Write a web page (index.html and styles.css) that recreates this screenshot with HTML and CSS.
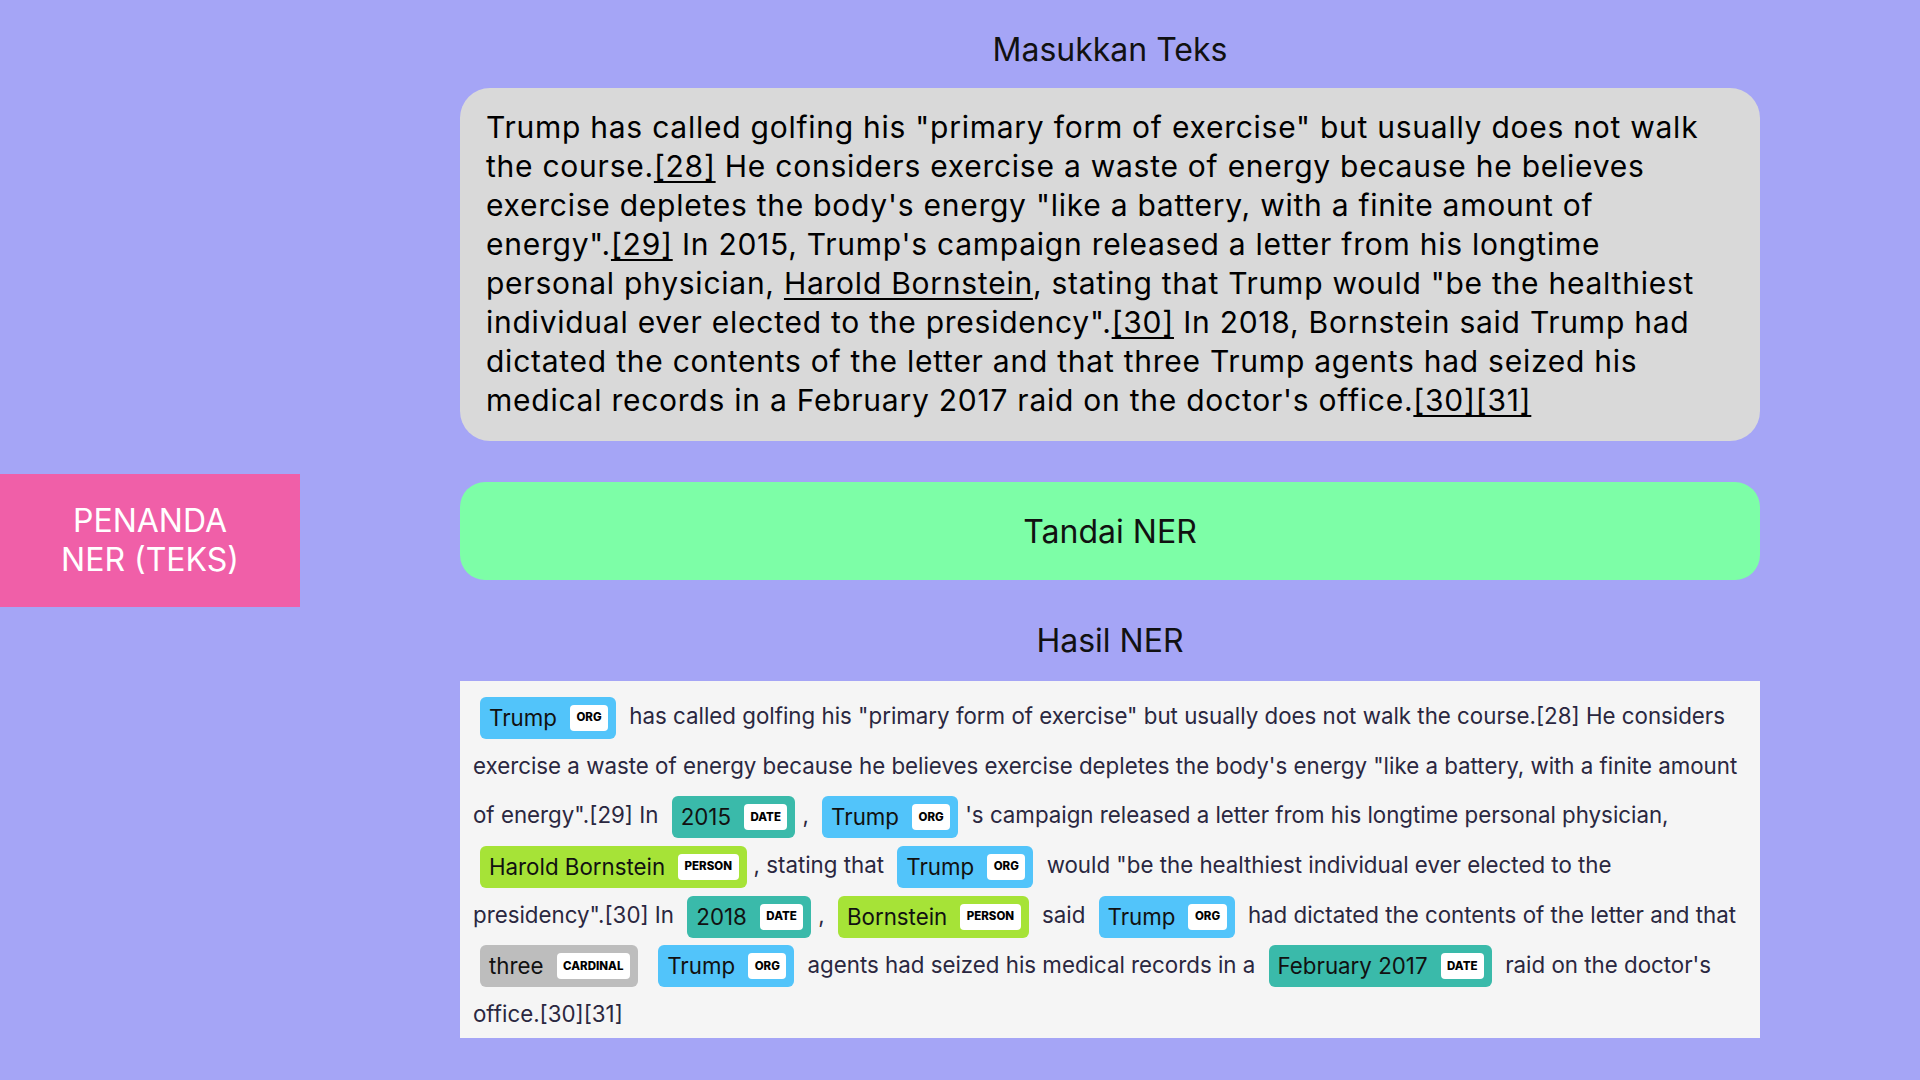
FILE: index.html
```html
<!DOCTYPE html>
<html lang="id">
<head>
<meta charset="utf-8">
<title>Penanda NER (Teks)</title>
<link rel="stylesheet" href="styles.css">
</head>
<body>
<div class="app">
  <aside class="sidebar">
    <div class="side-box">PENANDA<br>NER (TEKS)</div>
  </aside>
  <main class="main">
    <h2 class="heading">Masukkan Teks</h2>
    <div class="input">Trump has called golfing his "primary form of exercise" but usually does not walk the <span class="nw">course.<a href="#">[28]</a></span> He considers exercise a waste of energy because he believes exercise depletes the body's energy "like a battery, with a finite amount of <span class="nw">energy".<a href="#">[29]</a></span> In 2015, Trump's campaign released a letter from his longtime personal physician, <a href="#">Harold Bornstein</a>, stating that Trump would "be the healthiest individual ever elected to the <span class="nw">presidency".<a href="#">[30]</a></span> In 2018, Bornstein said Trump had dictated the contents of the letter and that three Trump agents had seized his medical records in a February 2017 raid on the doctor's <span class="nw">office.<a href="#">[30][31]</a></span></div>
    <button class="btn" type="button">Tandai NER</button>
    <h2 class="heading result-title">Hasil NER</h2>
    <div class="result"><mark class="ent org">Trump<span class="lbl">ORG</span></mark> has called golfing his "primary form of exercise" but usually does not walk the <span class="nw">course.[28]</span> He considers exercise a waste of energy because he believes exercise depletes the body's energy "like a battery, with a finite amount of <span class="nw">energy".[29]</span> In <mark class="ent date">2015<span class="lbl">DATE</span></mark>, <mark class="ent org">Trump<span class="lbl">ORG</span></mark>'s campaign released a letter from his longtime personal physician, <mark class="ent person">Harold Bornstein<span class="lbl">PERSON</span></mark>, stating that <mark class="ent org">Trump<span class="lbl">ORG</span></mark> would "be the healthiest individual ever elected to the <span class="nw">presidency".[30]</span> In <mark class="ent date">2018<span class="lbl">DATE</span></mark>, <mark class="ent person">Bornstein<span class="lbl">PERSON</span></mark> said <mark class="ent org">Trump<span class="lbl">ORG</span></mark> had dictated the contents of the letter and that <mark class="ent cardinal">three<span class="lbl">CARDINAL</span></mark> <mark class="ent org">Trump<span class="lbl">ORG</span></mark> agents had seized his medical records in a <mark class="ent date">February 2017<span class="lbl">DATE</span></mark> raid on the doctor's <span class="nw">office.[30][31]</span></div>
  </main>
</div>
</body>
</html>
```

FILE: styles.css
```css
html, body {
  margin: 0;
  padding: 0;
}

body {
  background: #a5a5f6;
  font-family: Inter, "Noto Sans", sans-serif;
  color: #111;
}

.app {
  display: flex;
  min-height: 1080px;
}

.sidebar {
  width: 300px;
  flex: none;
  display: flex;
  align-items: center;
}

.side-box {
  width: 300px;
  background: #f05fa8;
  color: #fff;
  font-size: 32px;
  line-height: 39px;
  text-align: center;
  padding: 27px 0 28px;
}

.main {
  width: 1300px;
  flex: none;
  margin-left: 160px;
  padding-top: 31px;
}

.heading {
  font-size: 32px;
  line-height: 38px;
  font-weight: 400;
  text-align: center;
  color: #111;
  margin: 0 0 19px;
}

.result-title {
  margin-top: 42px;
  margin-bottom: 21px;
}

.nw {
  white-space: nowrap;
}

.input {
  background: #d9d9d9;
  border-radius: 30px;
  padding: 20px 26px 21px;
  font-size: 30px;
  line-height: 39px;
  letter-spacing: 0.75px;
  color: #000;
}

.input a {
  color: inherit;
  text-decoration: underline;
  text-underline-offset: 4px;
  text-decoration-thickness: 2px;
}

.btn {
  display: flex;
  align-items: center;
  justify-content: center;
  width: 100%;
  height: 98px;
  margin-top: 41px;
  border: none;
  border-radius: 25px;
  background: #7dfea7;
  font-family: inherit;
  font-size: 32px;
  color: #111;
  cursor: pointer;
}

.result {
  background: #f5f5f5;
  box-sizing: border-box;
  height: 357px;
  padding: 10px 13px 0;
  font-size: 22.3px;
  line-height: 49.7px;
  color: #2a2740;
}

.ent {
  display: inline-flex;
  align-items: center;
  height: 42px;
  box-sizing: border-box;
  padding: 0 8px 0 9px;
  margin: 0 7px;
  border-radius: 6px;
  vertical-align: middle;
  color: #111;
  line-height: 1;
}

.ent.org { background: #52c4fa; }
.ent.date { background: #3abaaa; }
.ent.person { background: #a6e337; }
.ent.cardinal { background: #bdbdbd; }

.lbl {
  display: inline-flex;
  align-items: center;
  height: 26px;
  padding: 0 6.5px;
  margin-left: 13px;
  background: #fff;
  border-radius: 4px;
  font-size: 11.5px;
  font-weight: 800;
  color: #000;
  text-transform: uppercase;
}
```
